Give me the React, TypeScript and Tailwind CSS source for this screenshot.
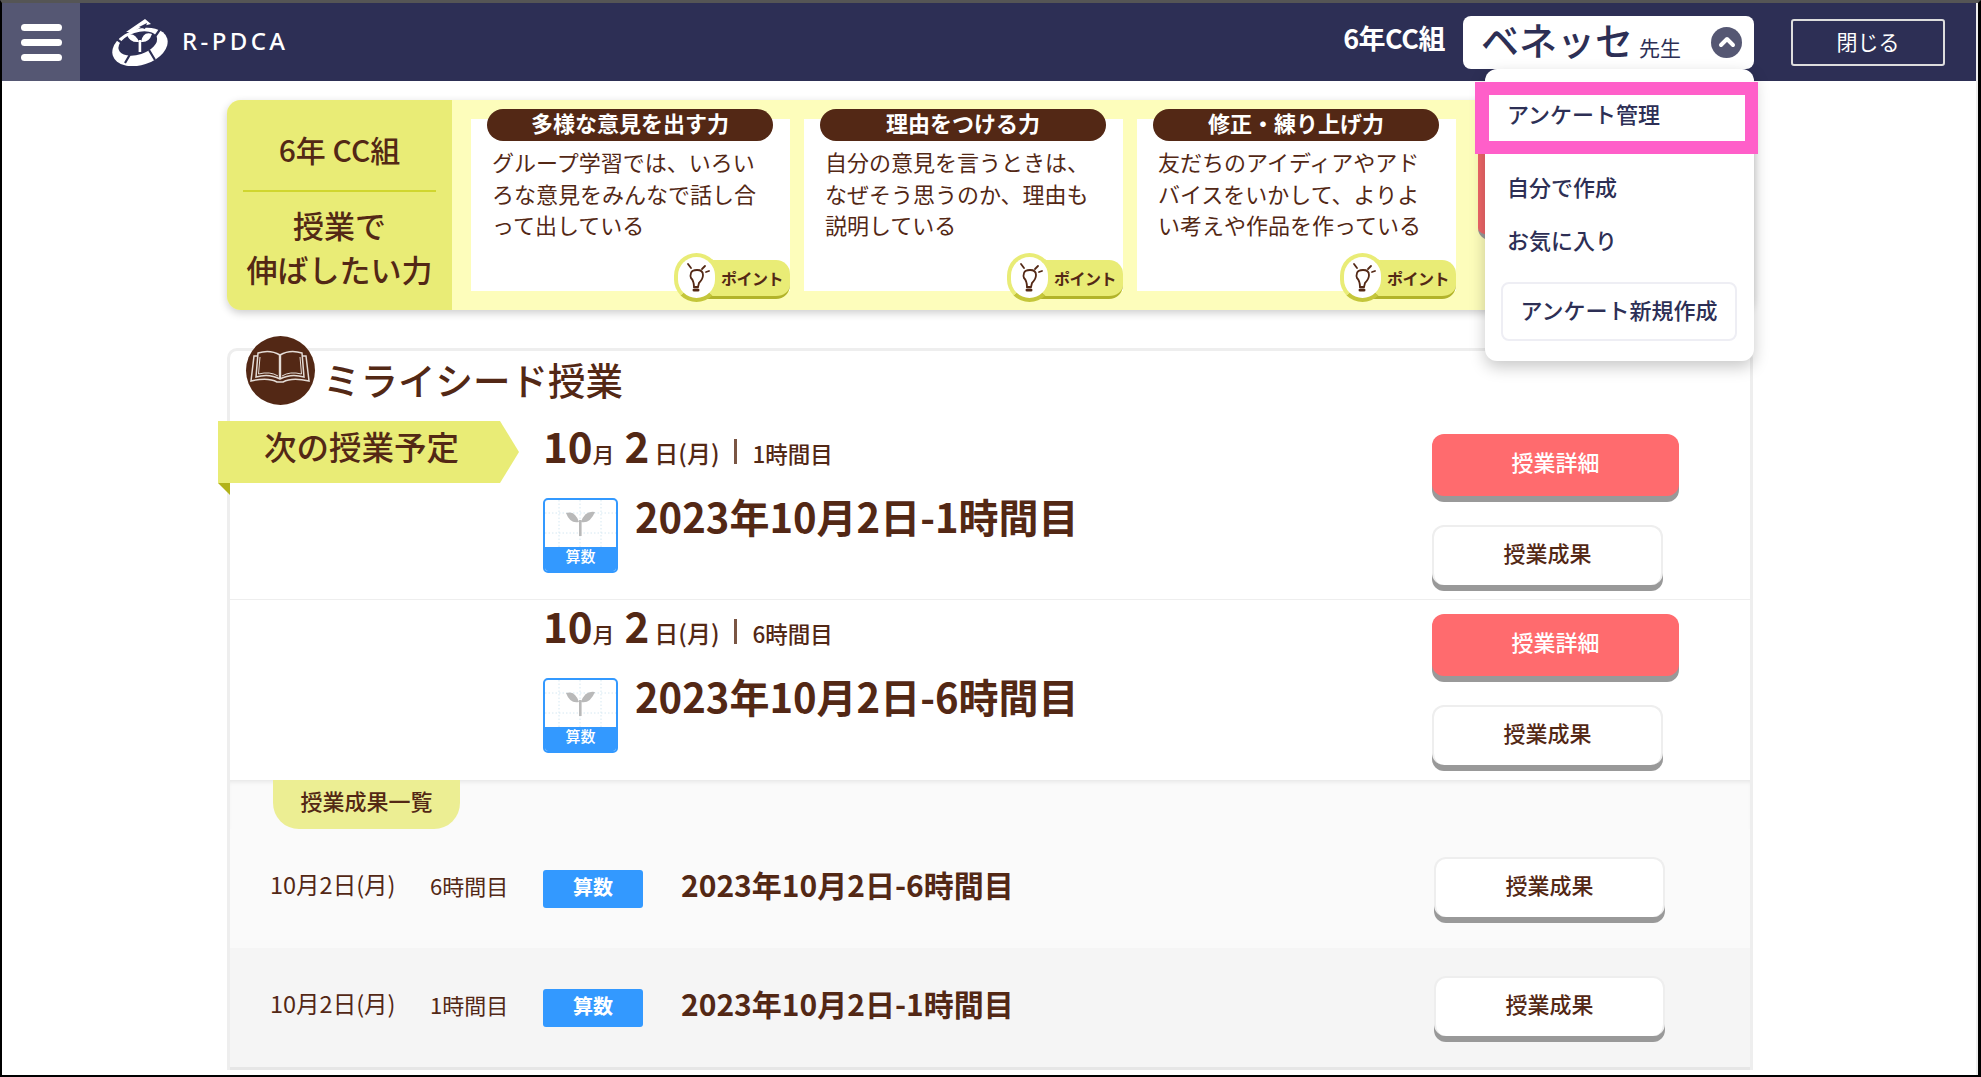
import { ChevronUp } from "lucide-react";

const brown = "text-[#532815]";

function Logo() {
  return (
    <svg width="58" height="48" viewBox="0 0 58 48" className="shrink-0">
      <g transform="rotate(-18 29 29)">
        <ellipse cx="29" cy="29" rx="28.5" ry="18" fill="#fff" />
        <ellipse cx="28" cy="25" rx="20" ry="11" fill="#2d2f55" />
      </g>
      <path d="M15 14 L34 1 L40 6 L32 8 L22 14 Z" fill="#fff" />
      <path d="M4 20 L14 27 M14 45 L21 33 M44 42 L38 32 M50 10 L43 20" stroke="#2d2f55" strokeWidth="2.2" />
      <path d="M16 17 Q24 14 28 24 Q19 25 16 17 Z M41 16 Q32 13 30 24 Q38 25 41 16 Z" fill="#fff" />
      <rect x="27.6" y="22" width="2.6" height="12" fill="#fff" />
      <path d="M28 9 L36 5 L34 11 Z" fill="#2d2f55" />
    </svg>
  );
}

function BookIcon() {
  return (
    <div className="w-[69px] h-[69px] rounded-full bg-[#532815] shrink-0 -mt-[15px] ml-[16px] z-10 relative">
      <svg width="69" height="69" viewBox="0 0 69 69" fill="none" stroke="#e4dcd6" strokeWidth="1.5">
        <path d="M34 19 Q24 13 12 17 L10 41 Q23 37 34 43 Q45 37 58 41 L56 17 Q44 13 34 19 Z" />
        <path d="M34 19 V43" strokeWidth="2.4" />
        <path d="M12 20 L8 20 L5 45 Q22 41 31 46 L37 46 Q46 41 63 45 L60 20 L56 20" />
        <path d="M14 21 L12.5 38 Q24 35 32 40 M54 21 L55.5 38 Q44 35 36 40" strokeWidth="1" />
      </svg>
    </div>
  );
}

function Bulb() {
  return (
    <svg width="28" height="34" viewBox="0 0 28 34" fill="none" stroke="#532815" strokeWidth="1.8" strokeLinecap="round">
      <path d="M8 12 Q9 9 14 9 Q20 9 20 14 Q20 18 16 22 L15 26 L11 26 Q11 20 8 17 Q7 15 8 12 Z" />
      <path d="M11 29 L15 29" strokeWidth="3" />
      <path d="M5 3 L8 7 M22 5 L19 8 M26 10 L23 11" />
    </svg>
  );
}

function PointBadge() {
  return (
    <div className="absolute right-0 -bottom-[11px] w-[116px] h-[49px] flex items-center">
      <div className="absolute right-0 top-[7px] w-[100px] h-[39px] bg-[#e9ec76] rounded-r-[14px] rounded-b-[14px] rounded-tl-none border-b-[3px] border-b-[#b2b32a] flex items-center justify-end pr-[7px]">
        <span className={`text-[16px] leading-none font-bold tracking-[-0.5px] ${brown}`}>ポイント</span>
      </div>
      <div className="absolute left-0 top-0 w-[45px] h-[49px] rounded-full bg-white border-[4px] border-[#e9ec76] border-b-[#c4c63a] flex items-center justify-center">
        <Bulb />
      </div>
    </div>
  );
}

function SkillCard({ title, lines }: { title: string; lines: string[] }) {
  return (
    <div className="relative w-[319px] h-[172px] bg-white shrink-0">
      <div className="absolute left-[16px] -top-[10px] w-[286px] h-[32px] rounded-[16px] bg-[#532815] text-white text-[22px] leading-[26px] font-bold text-center">
        {title}
      </div>
      <div className={`pt-[27px] pl-[21px] text-[22px] leading-[31.5px] whitespace-nowrap ${brown}`}>
        {lines.map((l) => (
          <div key={l}>{l}</div>
        ))}
      </div>
      <PointBadge />
    </div>
  );
}

function Thumb() {
  return (
    <div className="w-[75px] h-[75px] rounded-[5px] border-2 border-[#3399ff] overflow-hidden flex flex-col shrink-0 bg-white">
      <svg width="71" height="47" viewBox="0 0 71 47" className="shrink-0">
        <g stroke="#d5e8f2" strokeWidth="1" strokeDasharray="1.5 2">
          <path d="M0 13 H71 M0 33 H71 M14 0 V47 M35 0 V47 M56 0 V47" />
        </g>
        <path d="M21 13 Q30 10 34 22 Q25 24 21 13 Z M50 12 Q40 10 36 22 Q45 24 50 12 Z" fill="#b9b9b9" />
        <rect x="34" y="20" width="2.6" height="16" fill="#b9b9b9" />
      </svg>
      <div className="flex-1 bg-[#3399ff] text-white text-[15px] leading-[18px] font-medium text-center">算数</div>
    </div>
  );
}

function ResultButton({ className }: { className: string }) {
  return (
    <button className={`h-[60px] pb-[7px] rounded-[12px] bg-white border-2 border-[#eeeeee] border-b-0 shadow-[0_6px_0_#999999] text-[22px] font-medium text-[#532815] ${className}`}>
      授業成果
    </button>
  );
}

function LessonRow({ period, title, last }: { period: string; title: string; last?: boolean }) {
  return (
    <div className={`relative h-[180px] flex justify-between ${last ? "" : "border-b border-[#eeeeee]"}`}>
      <div className="ml-[313px]">
        <div className={`h-[56px] -mt-[3px] flex items-baseline whitespace-nowrap ${brown}`}>
          <span className="text-[42px] leading-[56px] font-bold">10</span>
          <span className="text-[22px] font-medium">月</span>
          <span className="text-[42px] leading-[56px] font-bold ml-[10px]">2</span>
          <span className="text-[24px] font-medium ml-[5px]">日(月)</span>
          <span className="w-[3px] h-[25px] bg-[#7a5644] ml-[15px] self-center translate-y-[6px]" />
          <span className="text-[22.5px] font-medium ml-[15px]">{period}</span>
        </div>
        <div className="mt-[25px] flex items-start">
          <Thumb />
          <div className={`ml-[17px] -mt-[3px] text-[40px] leading-[42px] font-bold whitespace-nowrap ${brown}`}>{title}</div>
        </div>
      </div>
      <div className="w-[247px] mr-[71px] pt-[14px] flex flex-col items-start">
        <button className="w-[247px] h-[62px] pb-[8px] rounded-[12px] bg-[#ff6b6e] shadow-[0_6px_0_#999999] text-white text-[22px] font-medium">
          授業詳細
        </button>
        <ResultButton className="w-[231px] mt-[29px]" />
      </div>
    </div>
  );
}

function ResultRow({ period, title, className }: { period: string; title: string; className: string }) {
  return (
    <div className={`h-[119px] flex items-center pl-[40px] pr-[85px] ${className}`}>
      <span className={`w-[160px] pb-[7px] text-[23.5px] ${brown}`}>10月2日(月)</span>
      <span className={`w-[113px] pb-[7px] text-[22px] ${brown}`}>{period}</span>
      <span className="w-[100px] h-[38px] rounded-[3px] bg-[#3399ff] text-white text-[20px] font-bold leading-[34px] text-center">算数</span>
      <span className={`ml-[38px] pb-[8px] flex-1 text-[30px] font-bold ${brown}`}>{title}</span>
      <ResultButton className="w-[231px] -mt-[3px]" />
    </div>
  );
}

function Dropdown() {
  return (
    <div className="absolute left-[22px] top-[53px] w-[269px] h-[292px] bg-white rounded-[12px] shadow-[0_6px_16px_rgba(0,0,0,0.22)] pt-[22px] pl-[22px] text-[22px] font-medium text-[#2d2f55] z-20">
      <div className="absolute -left-[10px] top-[13px] w-[283px] h-[72px] border-y-[13px] border-l-[14px] border-r-[13px] border-[#ff5fc9]" />
      <div className="h-[44px] leading-[44px]">アンケート管理</div>
      <div className="h-[44px] leading-[44px] mt-[29px]">自分で作成</div>
      <div className="h-[44px] leading-[44px] mt-[9px]">お気に入り</div>
      <div className="w-[236px] h-[59px] -ml-[6px] mt-[21px] rounded-[8px] border-2 border-[#eeeef4] text-center leading-[50px]">
        アンケート新規作成
      </div>
    </div>
  );
}

export default function App() {
  return (
    <div
      className="relative w-[1981px] h-[1077px] overflow-hidden bg-white border-l-2 border-r-[3px] border-b-2 border-t-[3px] border-l-black border-r-black border-b-black border-t-[#555555]"
      style={{ fontFamily: '"Noto Sans CJK JP", "Noto Sans", sans-serif' }}
    >
      <div className="h-full border-r-2 border-[#eeeeee] mr-0">
        <header className="h-[78px] w-[1974px] bg-[#2d2f55] flex items-center">
          <div className="w-[78px] h-full bg-[#555773] flex flex-col items-center justify-center gap-[8px] shrink-0">
            <span className="w-[41px] h-[7px] rounded-full bg-white" />
            <span className="w-[41px] h-[7px] rounded-full bg-white" />
            <span className="w-[41px] h-[7px] rounded-full bg-white" />
          </div>
          <div className="ml-[31px]">
            <Logo />
          </div>
          <span className="ml-[13px] pb-[2px] text-white text-[24px] tracking-[3.4px] font-medium" style={{ fontFamily: '"Noto Sans", sans-serif' }}>
            R-PDCA
          </span>
          <div className="ml-auto flex items-center">
            <span className="pb-[7px] text-white text-[27px] font-bold tracking-[-0.5px]">6年CC組</span>
            <div className="relative ml-[18px] w-[291px] h-[53px] bg-white rounded-[8px] flex items-center text-[#2d2f55] pl-[18px]">
              <span className="pb-[7px] text-[38px] leading-none font-medium">ベネッセ</span>
              <span className="ml-[6px] mt-[10px] text-[21px] leading-none">先生</span>
              <span className="absolute right-[12px] top-[11px] w-[31px] h-[31px] rounded-full bg-[#555773] flex items-center justify-center">
                <ChevronUp size={24} strokeWidth={4} color="#ffffff" />
              </span>
              <Dropdown />
            </div>
            <button className="ml-[37px] mr-[31px] w-[154px] h-[47px] rounded-[3px] border-2 border-[#dddddd] text-white text-[21px]">
              閉じる
            </button>
          </div>
        </header>

        <main className="ml-[225px] w-[1526px]">
          <section className="mt-[19px] h-[210px] flex rounded-[14px] overflow-hidden bg-[#fdfdbb] shadow-[0_3px_8px_rgba(0,0,0,0.2)]">
            <div className={`w-[225px] shrink-0 bg-[#e9ec76] px-[16px] text-center font-medium ${brown}`}>
              <div className="h-[92px] border-b-2 border-[#d0d62f] text-[30px] leading-[99px] whitespace-nowrap">6年 CC組</div>
              <div className="mt-[11px] text-[31px] leading-[44px] whitespace-nowrap -mx-[4px]">
                授業で
                <br />
                伸ばしたい力
              </div>
            </div>
            <div className="flex gap-[14px] pl-[19px] pt-[19px]">
              <SkillCard title="多様な意見を出す力" lines={["グループ学習では、いろい", "ろな意見をみんなで話し合", "って出している"]} />
              <SkillCard title="理由をつける力" lines={["自分の意見を言うときは、", "なぜそう思うのか、理由も", "説明している"]} />
              <SkillCard title="修正・練り上げ力" lines={["友だちのアイディアやアド", "バイスをいかして、よりよ", "い考えや作品を作っている"]} />
              <div className="ml-[8px] w-[200px] h-[121px] rounded-l-[12px] bg-[#ee6668] border-b-[5px] border-[#999999] shrink-0" />
            </div>
          </section>

          <section className="mt-[38px] border-x-[3px] border-t-[3px] border-[#eeeeee] rounded-t-[10px] relative">
            <div className="h-[69px] flex items-start">
              <BookIcon />
              <h1 className={`ml-[8px] -mt-[2px] text-[37.5px] leading-[60px] font-medium whitespace-nowrap ${brown}`}>ミライシード授業</h1>
            </div>
            <LessonRow period="1時間目" title="2023年10月2日-1時間目" />
            <LessonRow period="6時間目" title="2023年10月2日-6時間目" last />
            <div className="absolute -left-[12px] top-[70px] w-[301px] h-[74px]">
              <div className={`h-[62px] bg-[#e9ec76] pl-[46px] text-[32.5px] leading-[50px] font-medium [clip-path:polygon(0_0,282px_0,100%_50%,282px_100%,0_100%)] ${brown}`}>
                次の授業予定
              </div>
              <div className="w-[12px] h-[12px] bg-[#b2b21a] [clip-path:polygon(0_0,100%_0,100%_100%)]" />
            </div>
            <div className="bg-[#fafafa] shadow-[inset_0_4px_4px_-2px_rgba(0,0,0,0.08)] border-b-[3px] border-b-[#e6e6e6]">
              <div className={`ml-[43px] w-[187px] h-[49px] rounded-b-[26px] bg-[#ecee93] text-center text-[22px] font-medium leading-[40px] ${brown}`}>
                授業成果一覧
              </div>
              <ResultRow period="6時間目" title="2023年10月2日-6時間目" className="bg-[#fafafa]" />
              <ResultRow period="1時間目" title="2023年10月2日-1時間目" className="bg-[#f5f5f5]" />
            </div>
          </section>
        </main>
      </div>
    </div>
  );
}
